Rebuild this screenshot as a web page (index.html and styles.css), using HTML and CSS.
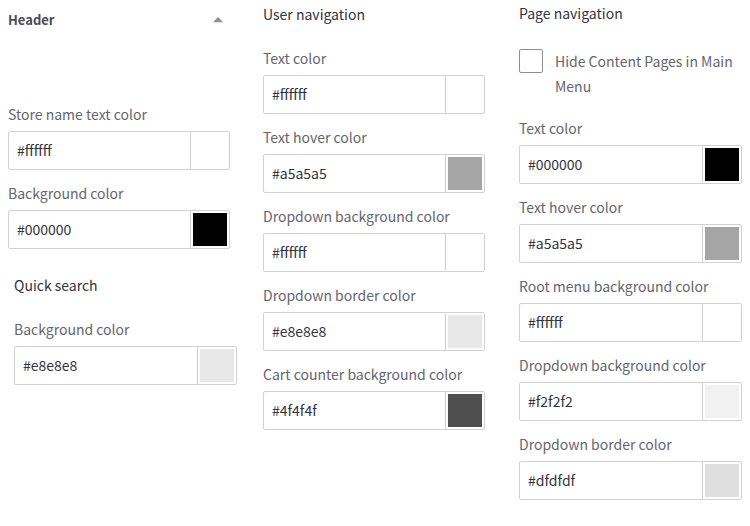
FILE: index.html
```html
<!DOCTYPE html>
<html lang="en">
<head>
<meta charset="utf-8">
<meta name="viewport" content="width=device-width, initial-scale=1">
<title>Header</title>
<link rel="stylesheet" href="styles.css">
</head>
<body>
<main class="settings">
  <section class="column column-header">
    <button class="toggle" type="button" aria-expanded="true">
      <span>Header</span>
      <svg class="arrow" width="10" height="6" viewBox="0 0 10 6" aria-hidden="true"><path d="M0 5.2 4.4.6Q5 0 5.6.6L10 5.2Z" fill="#8d9492"/></svg>
    </button>
    <div class="fields">
      <div class="field">
        <label for="store-text">Store name text color</label>
        <div class="picker"><input class="hex" id="store-text" type="text" value="#ffffff"><input class="swatch" type="color" value="#ffffff" aria-label="Store name text color"></div>
      </div>
      <div class="field">
        <label for="header-bg">Background color</label>
        <div class="picker"><input class="hex" id="header-bg" type="text" value="#000000"><input class="swatch" type="color" value="#000000" aria-label="Background color"></div>
      </div>
    </div>
    <section class="subsection">
      <h2>Quick search</h2>
      <div class="field">
        <label for="search-bg">Background color</label>
        <div class="picker"><input class="hex" id="search-bg" type="text" value="#e8e8e8"><input class="swatch" type="color" value="#e8e8e8" aria-label="Background color"></div>
      </div>
    </section>
  </section>

  <section class="column column-user">
    <h2>User navigation</h2>
    <div class="fields">
      <div class="field">
        <label for="user-text">Text color</label>
        <div class="picker"><input class="hex" id="user-text" type="text" value="#ffffff"><input class="swatch" type="color" value="#ffffff" aria-label="Text color"></div>
      </div>
      <div class="field">
        <label for="user-hover">Text hover color</label>
        <div class="picker"><input class="hex" id="user-hover" type="text" value="#a5a5a5"><input class="swatch" type="color" value="#a5a5a5" aria-label="Text hover color"></div>
      </div>
      <div class="field">
        <label for="user-drop-bg">Dropdown background color</label>
        <div class="picker"><input class="hex" id="user-drop-bg" type="text" value="#ffffff"><input class="swatch" type="color" value="#ffffff" aria-label="Dropdown background color"></div>
      </div>
      <div class="field">
        <label for="user-drop-border">Dropdown border color</label>
        <div class="picker"><input class="hex" id="user-drop-border" type="text" value="#e8e8e8"><input class="swatch" type="color" value="#e8e8e8" aria-label="Dropdown border color"></div>
      </div>
      <div class="field">
        <label for="cart-bg">Cart counter background color</label>
        <div class="picker"><input class="hex" id="cart-bg" type="text" value="#4f4f4f"><input class="swatch" type="color" value="#4f4f4f" aria-label="Cart counter background color"></div>
      </div>
    </div>
  </section>

  <section class="column column-page">
    <h2>Page navigation</h2>
    <div class="option">
      <input class="checkbox" id="hide-pages" type="checkbox">
      <label for="hide-pages">Hide Content Pages in Main Menu</label>
    </div>
    <div class="fields">
      <div class="field">
        <label for="page-text">Text color</label>
        <div class="picker"><input class="hex" id="page-text" type="text" value="#000000"><input class="swatch" type="color" value="#000000" aria-label="Text color"></div>
      </div>
      <div class="field">
        <label for="page-hover">Text hover color</label>
        <div class="picker"><input class="hex" id="page-hover" type="text" value="#a5a5a5"><input class="swatch" type="color" value="#a5a5a5" aria-label="Text hover color"></div>
      </div>
      <div class="field">
        <label for="root-bg">Root menu background color</label>
        <div class="picker"><input class="hex" id="root-bg" type="text" value="#ffffff"><input class="swatch" type="color" value="#ffffff" aria-label="Root menu background color"></div>
      </div>
      <div class="field">
        <label for="page-drop-bg">Dropdown background color</label>
        <div class="picker"><input class="hex" id="page-drop-bg" type="text" value="#f2f2f2"><input class="swatch" type="color" value="#f2f2f2" aria-label="Dropdown background color"></div>
      </div>
      <div class="field">
        <label for="page-drop-border">Dropdown border color</label>
        <div class="picker"><input class="hex" id="page-drop-border" type="text" value="#dfdfdf"><input class="swatch" type="color" value="#dfdfdf" aria-label="Dropdown border color"></div>
      </div>
    </div>
  </section>
</main>
</body>
</html>
```
FILE: styles.css
```css
* {
  box-sizing: border-box;
}

body {
  margin: 0;
  background: #fff;
  color: #33333f;
  font: 14px/20px "Noto Sans CJK JP", "Noto Sans", sans-serif;
}

.settings {
  display: grid;
  grid-template-columns: 222fr 223fr 223fr;
  column-gap: 33px;
  align-items: start;
  padding: 0 8px;
}

.column {
  min-width: 0;
}

.column-header {
  padding-top: 10px;
}

.column-user {
  padding: 4px 1px 0 0;
}

.column-page {
  padding-top: 3px;
}

h2 {
  margin: 0 0 24px;
  font-size: 14px;
  font-weight: 400;
}

.toggle {
  display: flex;
  align-items: center;
  justify-content: space-between;
  width: 100%;
  margin: 0 0 74px;
  padding: 0 7px 0 0;
  border: 0;
  background: none;
  color: #4a4a58;
  font: inherit;
  font-size: 13px;
  font-weight: 700;
  cursor: pointer;
}

.fields {
  display: grid;
  gap: 13px;
}

.field {
  display: grid;
  gap: 7px;
}

.field label,
.option label {
  color: #65656f;
}

.picker {
  display: flex;
  height: 39px;
  border: 1px solid #d2d2d4;
  border-radius: 2px;
}

.hex {
  flex: 1;
  min-width: 0;
  padding: 0 8px 2px;
  border: 0;
  background: none;
  color: #33333f;
  font: inherit;
}

.swatch {
  appearance: none;
  flex: none;
  width: 39px;
  height: 37px;
  padding: 2px;
  border: 0;
  border-left: 1px solid #d2d2d4;
  background: none;
  cursor: pointer;
}

.swatch::-webkit-color-swatch-wrapper {
  padding: 0;
}

.swatch::-webkit-color-swatch {
  border: 0;
  border-radius: 0;
}

.subsection {
  margin: 26px -7px 0 6px;
}

.option {
  display: flex;
  gap: 12px;
  margin-bottom: 19px;
}

.option label {
  padding-top: 2px;
  line-height: 25px;
}

.checkbox {
  appearance: none;
  flex: none;
  width: 24px;
  height: 24px;
  margin: 2px 0 0;
  border: 1px solid #8e8e96;
  border-radius: 2px;
  background: #fff;
}

.checkbox:checked {
  background: #65656f;
}
```
